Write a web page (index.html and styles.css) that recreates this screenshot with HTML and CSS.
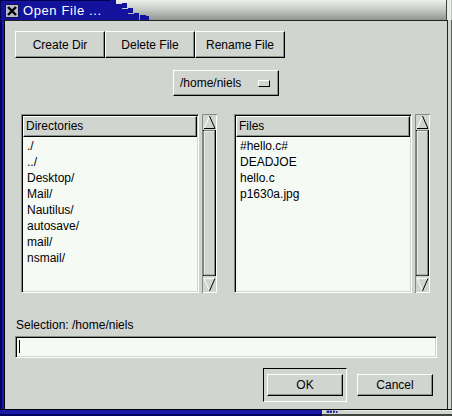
FILE: index.html
```html
<!DOCTYPE html>
<html>
<head>
<meta charset="utf-8">
<link rel="stylesheet" href="styles.css">
</head>
<body>
<div class="win">
  <div class="title">
    <div class="title-blue">
      <svg class="close" width="14" height="14" viewBox="0 0 14 14">
        <rect x="0.5" y="0.5" width="13" height="13" fill="#b8bcc8" stroke="#10104a"/>
        <path d="M3 3 L11 11 M11 3 L3 11" stroke="#000" stroke-width="2.4"/>
      </svg>
      <span class="title-text">Open File ...</span>
    </div>
    <svg class="steps" width="40" height="20" viewBox="0 0 40 20">
      <rect x="0" y="0" width="6" height="20" fill="#12129c"/>
      <rect x="6" y="4" width="6" height="16" fill="#12129c"/>
      <rect x="12" y="3" width="5" height="5" fill="#12129c"/>
      <rect x="12" y="9" width="6" height="11" fill="#12129c"/>
      <rect x="18" y="8" width="5" height="5" fill="#12129c"/>
      <rect x="18" y="14" width="6" height="6" fill="#12129c"/>
      <rect x="24" y="13" width="5" height="7" fill="#12129c"/>
      <rect x="30" y="15" width="6" height="5" fill="#12129c"/>
      <rect x="36" y="16" width="3" height="4" fill="#12129c"/>
    </svg>
    <div class="title-gray"></div>
  </div>
  <div class="mid">
    <div class="fl"></div>
    <div class="content">
      <div class="btnrow">
        <div class="btn w90">Create Dir</div>
        <div class="btn w90">Delete File</div>
        <div class="btn w90">Rename File</div>
      </div>
      <div class="droprow">
        <div class="drop"><span>/home/niels</span><span class="ind"></span></div>
      </div>
      <div class="panes">
        <div class="pane">
          <div class="list">
            <div class="lhead">Directories</div>
            <div class="items">
              <div class="item">./</div>
              <div class="item">../</div>
              <div class="item">Desktop/</div>
              <div class="item">Mail/</div>
              <div class="item">Nautilus/</div>
              <div class="item">autosave/</div>
              <div class="item">mail/</div>
              <div class="item">nsmail/</div>
            </div>
          </div>
          <svg class="sb" width="15" height="179" viewBox="0 0 15 179">
            <rect x="0" y="0" width="15" height="179" fill="#d1d5d0"/>
            <path d="M0.5 179 V0.5 H15" stroke="#868a86" fill="none"/>
            <path d="M14.5 1 V178.5 H1" stroke="#ffffff" fill="none"/>
            <path d="M2 14.5 L7.5 2 L13 14.5" fill="#d1d5d0" stroke="none"/>
            <path d="M2 14.5 L7.5 2" stroke="#ffffff" fill="none"/>
            <path d="M7.5 2 L13 14.5 H2" stroke="#000" fill="none"/>
            <rect x="1.5" y="16.5" width="12" height="145" fill="#d1d5d0" stroke="#000"/>
            <path d="M2 161 V17 H13" stroke="#ffffff" fill="none"/>
            <path d="M12.5 17 V161 H2" stroke="#868a86" fill="none"/>
            <path d="M2 164.5 H13" stroke="#ffffff" fill="none"/>
            <path d="M2 164.5 L7.5 177" stroke="#ffffff" fill="none"/>
            <path d="M7.5 177 L13 164.5" stroke="#000" fill="none"/>
          </svg>
        </div>
        <div class="pane">
          <div class="list">
            <div class="lhead">Files</div>
            <div class="items">
              <div class="item">#hello.c#</div>
              <div class="item">DEADJOE</div>
              <div class="item">hello.c</div>
              <div class="item">p1630a.jpg</div>
            </div>
          </div>
          <svg class="sb" width="15" height="179" viewBox="0 0 15 179">
            <rect x="0" y="0" width="15" height="179" fill="#d1d5d0"/>
            <path d="M0.5 179 V0.5 H15" stroke="#868a86" fill="none"/>
            <path d="M14.5 1 V178.5 H1" stroke="#ffffff" fill="none"/>
            <path d="M2 14.5 L7.5 2" stroke="#ffffff" fill="none"/>
            <path d="M7.5 2 L13 14.5 H2" stroke="#000" fill="none"/>
            <rect x="1.5" y="16.5" width="12" height="145" fill="#d1d5d0" stroke="#000"/>
            <path d="M2 161 V17 H13" stroke="#ffffff" fill="none"/>
            <path d="M12.5 17 V161 H2" stroke="#868a86" fill="none"/>
            <path d="M2 164.5 H13" stroke="#ffffff" fill="none"/>
            <path d="M2 164.5 L7.5 177" stroke="#ffffff" fill="none"/>
            <path d="M7.5 177 L13 164.5" stroke="#000" fill="none"/>
          </svg>
        </div>
      </div>
      <div class="sel">Selection: /home/niels</div>
      <div class="entry"><span class="caret"></span></div>
      <div class="actions">
        <div class="default"><div class="btn b76">OK</div></div>
        <div class="btn b76">Cancel</div>
      </div>
    </div>
    <div class="fr"></div>
  </div>
  <div class="bottom">
    <div class="bottom-blue"></div>
    <svg class="bsteps" width="22" height="7" viewBox="0 0 22 7">
      <rect x="0" y="1" width="4" height="4" fill="#12129c"/>
      <rect x="5" y="1" width="4" height="4" fill="#12129c"/>
      <rect x="11" y="1" width="3" height="4" fill="#12129c"/>
      <rect x="16" y="2" width="3" height="3" fill="#12129c"/>
    </svg>
    <div class="bottom-gray"></div>
  </div>
</div>
</body>
</html>
```
FILE: styles.css
```css
html, body {
  margin: 0;
  padding: 0;
  background: #d1d5d0;
}
body {
  font-family: "Liberation Sans", Arial, sans-serif;
  font-size: 12px;
  color: #000;
}
.win {
  width: 452px;
  height: 416px;
  display: flex;
  flex-direction: column;
  overflow: hidden;
}
.title {
  height: 20px;
  display: flex;
  flex: none;
}
.title-blue {
  width: 110px;
  background: #12129c;
  display: flex;
  align-items: flex-start;
  box-shadow: inset 1px 1px 0 #000050;
}
.close {
  margin: 4px 0 0 5px;
  flex: none;
}
.title-text {
  color: #fff;
  font-size: 13px;
  letter-spacing: 0.6px;
  margin: 3px 0 0 4px;
  line-height: 15px;
  white-space: nowrap;
}
.steps {
  flex: none;
  background: linear-gradient(#eef0ee, #c4c8c4 50%, #8e948e);
}
.title-gray {
  flex: 1;
  background: linear-gradient(#eef0ee, #c4c8c4 50%, #8e948e);
  border-right: 1px solid #c0c4c0;
  box-shadow: inset -4px 0 0 #e8ece8, inset -5px 0 0 #404440;
}
.mid {
  height: 389px;
  display: flex;
  flex: none;
}
.fl {
  width: 2px;
  background: #1a1aa8;
  border-left: 2px solid #000060;
  border-right: 1px solid #000;
}
.fr {
  width: 3px;
  background: #d1d5d0;
  border-left: 1px solid #202420;
  border-right: 1px solid #606460;
}
.content {
  flex: 1;
  border-top: 1px solid #202420;
  padding: 10px 10px 0 10px;
  display: flex;
  flex-direction: column;
}
.btn {
  box-sizing: border-box;
  background: #d1d5d0;
  border: 1px solid;
  border-color: #ffffff #000 #000 #ffffff;
  box-shadow: inset -1px -1px 0 #8c908c;
  display: flex;
  align-items: center;
  justify-content: center;
  white-space: nowrap;
}
.btnrow {
  display: flex;
  height: 27px;
}
.w90 {
  width: 90px;
  height: 27px;
}
.droprow {
  display: flex;
  justify-content: center;
  margin-top: 12px;
}
.drop {
  box-sizing: border-box;
  width: 106px;
  height: 26px;
  border: 1px solid;
  border-color: #ffffff #000 #000 #ffffff;
  box-shadow: inset -1px -1px 0 #8c908c;
  display: flex;
  align-items: center;
  padding: 0 8px 0 6px;
}
.ind {
  margin-left: auto;
  width: 12px;
  height: 7px;
  box-sizing: border-box;
  border: 1px solid;
  border-color: #ffffff #000 #000 #ffffff;
  background: #d1d5d0;
}
.panes {
  display: flex;
  gap: 17px;
  margin-top: 18px;
  padding-left: 6px;
  height: 179px;
}
.pane {
  display: flex;
  gap: 3px;
  width: 196px;
}
.sb {
  flex: none;
  display: block;
}
.list {
  box-sizing: border-box;
  width: 178px;
  height: 179px;
  border: 1px solid;
  border-color: #868a86 #ffffff #ffffff #868a86;
  box-shadow: inset 1px 1px 0 #000, inset -1px -1px 0 #d1d5d0;
  background: #f5faf5;
  padding: 1px 1px 1px 1px;
}
.lhead {
  box-sizing: border-box;
  height: 21px;
  background: #d1d5d0;
  border: 1px solid;
  border-color: #ffffff #000 #000 #ffffff;
  box-shadow: inset -1px -1px 0 #8c908c;
  padding-left: 2px;
  line-height: 19px;
}
.items {
  padding: 1px 0 0 4px;
}
.item {
  height: 16px;
  line-height: 16px;
  white-space: nowrap;
}
.sel {
  margin-top: 25px;
  padding-left: 1px;
  line-height: 14px;
}
.entry {
  box-sizing: border-box;
  margin-top: 4px;
  height: 22px;
  border: 1px solid;
  border-color: #868a86 #ffffff #ffffff #868a86;
  box-shadow: inset 1px 1px 0 #000, inset -1px -1px 0 #d1d5d0;
  background: #f5faf5;
  padding: 3px 0 0 3px;
}
.caret {
  display: block;
  width: 1px;
  height: 13px;
  background: #000;
}
.actions {
  margin-top: 10px;
  display: flex;
  justify-content: flex-end;
  align-items: center;
  gap: 10px;
  padding-right: 4px;
}
.default {
  border: 1px solid;
  border-color: #000 #ffffff #ffffff #000;
  padding: 5px 3px;
}
.b76 {
  width: 76px;
  height: 22px;
}
.bottom {
  height: 7px;
  flex: none;
  display: flex;
  border-top: 1px solid #000;
  box-sizing: border-box;
}
.bottom-blue {
  width: 322px;
  background: #1a1aa8;
  border-bottom: 2px solid #000060;
}
.bsteps {
  flex: none;
  background: #d1d5d0;
  border-bottom: 2px solid #404440;
  box-sizing: content-box;
  height: 4px;
}
.bottom-gray {
  flex: 1;
  background: #d1d5d0;
  border-top: 1px solid #e8ece8;
  border-bottom: 2px solid #404440;
}
```
